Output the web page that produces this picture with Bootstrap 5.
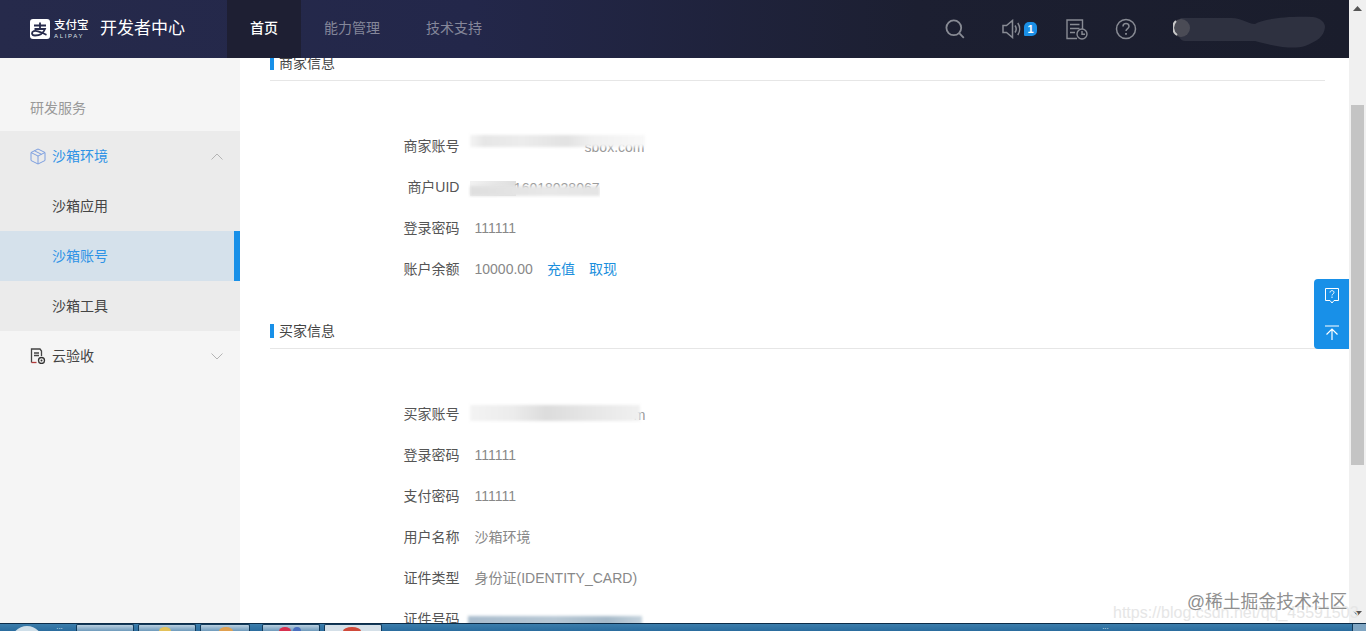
<!DOCTYPE html>
<html lang="zh-CN">
<head>
  <meta charset="UTF-8" />
  <title>沙箱账号 - 开发者中心</title>
  <link href="https://cdn.jsdelivr.net/npm/bootstrap@5.3.3/dist/css/bootstrap.min.css" rel="stylesheet" />
  <script src="https://cdn.jsdelivr.net/npm/bootstrap@5.3.3/dist/js/bootstrap.bundle.min.js"></script>
  <style>
    html, body { height: 631px; overflow: hidden; }
    body {
      font-family: "Liberation Sans", "Noto Sans CJK SC", sans-serif;
      font-size: 14px;
      color: #555;
      background: #fff;
    }
    .app-frame { height: 623px; }
    .page-pane { width: 1349px; min-width: 0; }

    /* header */
    .top-bar {
      height: 58px;
      flex-wrap: nowrap;
      background: linear-gradient(90deg, #262a4b 0%, #23274a 35%, #1c1f31 68%, #1a1d2c 100%);
      position: relative;
      z-index: 5;
    }
    .brand-box { width: 227px; padding-left: 30px; gap: 4px; }
    .brand-words { width: 34px; flex: none; }
    .brand-cn { font-size: 11.5px; line-height: 13px; color: #fff; white-space: nowrap; font-weight: 500; }
    .brand-en { font-size: 6px; line-height: 8px; color: #dfe0e6; letter-spacing: 1.7px; white-space: nowrap; }
    .brand-title { font-size: 17px; color: #fff; margin-left: 8px; white-space: nowrap; }
    .top-tab { height: 58px; line-height: 56px; padding: 0 23px; color: #85879a; }
    .top-tab.is-on { background: #1e1f33; color: #fff; font-weight: 500; }
    .tool-box { margin-left: auto; padding-right: 22px; }
    .tool-icon { display: block; color: #888b94; }
    .msg-count {
      position: absolute; left: 22px; top: 3px;
      width: 13px; height: 14px; line-height: 14px;
      border-radius: 5px 5px 5px 1px;
      background: #1a8fe6; color: #fff; font-size: 11px; font-weight: 700; text-align: center;
    }

    /* sidebar */
    .side-menu { width: 240px; flex: none; background: #f5f5f5; }
    .side-caption { height: 73px; padding: 40px 0 0 30px; line-height: 20px; color: #999; }
    .side-group { background: #ebebeb; }
    .side-link { height: 50px; padding-left: 52px; color: #444; }
    .side-head { height: 50px; padding: 0 17px 0 30px; color: #444; gap: 6px; }
    .side-head.is-open { color: #2f93e6; }
    .side-link.is-on { background: #d5e1eb; color: #2f93e6; border-right: 6px solid #1890e8; }

    /* content */
    .content-pane { padding: 0 24px 0 30px; overflow: hidden; }
    .info-title {
      position: relative; height: 28px; padding-left: 9px; line-height: 20px;
      border-bottom: 1px solid #e6e6e6; color: #444;
    }
    .info-title::before {
      content: ""; position: absolute; left: 0; top: 3px;
      width: 4px; height: 14px; background: #1890e8;
    }
    .info-first { margin-top: -5px; }
    .info-next { margin-top: 31px; }
    .info-list { padding-top: 45px; margin: 0; }
    .info-row { height: 41px; margin: 0; }
    .info-row dt { width: 189.5px; font-weight: 400; text-align: right; color: #555; }
    .info-row dd { margin: 0 0 0 15px; color: #888; white-space: nowrap; }
    .info-row a { color: #1a8fdd; text-decoration: none; margin-left: 14px; }

    /* smeared values */
    .smear-box { position: relative; display: block; height: 20px; line-height: 20px; margin-left: -7px; text-align: right; color: #999; }
    .smear-box::before {
      content: ""; position: absolute; filter: blur(1.5px);
      background: linear-gradient(90deg, #f4f4f4 0, #e6e6e6 8%, #ececec 30%, #e2e2e2 55%, #f0f0f0 70%, #f8f8f8 100%);
    }
    .smear-mail { width: 177px; }
    .smear-mail::before { left: 2px; right: 0; top: -2px; bottom: 10px; }
    .smear-uid {
      width: 132px; overflow: hidden;
      background: linear-gradient(90deg, #f2f2f2, #dedede) no-repeat 2px 3px / 46px 15px;
    }
    .smear-uid::before { left: 2px; right: 0; top: 8px; bottom: 2px; background: linear-gradient(90deg, #dedede, #e8e8e8 60%, #e4e4e4); }
    .smear-buyer { width: 178px; }
    .smear-buyer::before { left: 2px; right: 6px; top: 0; bottom: 4px; background: linear-gradient(90deg, #f3f3f3, #ececec 25%, #dcdcdc 45%, #e6e6e6 70%, #f0f0f0); }
    .smear-card { width: 178px; margin-left: -9px; }
    .smear-card::before { left: 2px; right: 2px; top: 6px; bottom: -4px; background: linear-gradient(90deg, #a9bccd, #b7c7d4 50%, #a6bac9 80%, #c4d2dc); }

    /* floating buttons */
    .float-tools {
      position: absolute; right: 0; top: 279px; width: 35px; height: 70px;
      background: #1890e8; border-radius: 4px 0 0 4px; z-index: 4;
    }

    /* watermarks */
    .mark-juejin {
      position: absolute; left: 1187px; top: 589px; font-size: 17.8px; line-height: 26px;
      color: #8f8f8f; text-shadow: 0 0 2px #fff; white-space: nowrap; z-index: 6;
    }
    .mark-csdn {
      position: absolute; left: 1113px; top: 603px; font-size: 16px; line-height: 20px;
      color: #e6e6e6; white-space: nowrap; z-index: 6;
    }

    /* scrollbar */
    .scroll-rail { width: 17px; flex: none; background: #f0f0f0; position: relative; z-index: 3; }
    .scroll-up { height: 17px; }
    .scroll-down { height: 20px; }
    .scroll-thumb { height: 360px; margin: 88px 2px 0 2px; background: #c4c4c4; }

    /* taskbar */
    .task-bar {
      height: 8px; border-top: 1px solid #0c2c48; overflow: hidden;
      background: linear-gradient(180deg, #3b7dab, #2a6c9e);
      position: relative; z-index: 8;
    }
    .task-orb { width: 32px; height: 32px; margin: 2px 0 0 11px; border-radius: 50%; background: #cfdfe9; flex: none; }
    .task-dots { width: 33px; color: #dfe9f0; font-size: 8px; line-height: 6px; text-align: center; flex: none; }
    .task-dots-end { margin-left: auto; }
    .task-btn { height: 7px; background: linear-gradient(180deg, #b9cfdf, #6f9bbc); border: 1px solid #123a5a; border-bottom: 0; border-radius: 2px 2px 0 0; flex: none; position: relative; }
    .task-time { color: #fff; font-size: 12px; line-height: 14px; margin: 5px 20px 0 180px; }
    .task-desk { width: 14px; height: 7px; background: #7fa5c2; border-left: 1px solid #123a5a; flex: none; }
    .tb-spot { position: absolute; top: 2px; height: 8px; border-radius: 50%; }
  </style>
</head>
<body>
  <div class="app-frame d-flex">
    <div class="page-pane d-flex flex-column position-relative">

      <nav class="top-bar navbar p-0 d-flex align-items-center">
        <div class="brand-box d-flex align-items-center">
          <svg width="20" height="20" viewBox="0 0 20 20" class="flex-none">
            <rect width="20" height="20" rx="3" fill="#fff" />
            <path d="M4 6.500h12M10 3.500v6M4.500 10h10.500c-1.500 4-5 6.500-10 6.500-2 0-3-.8-3-2.200 0-2 2.600-3 6-2 2.500.7 5 2 8.500 3.500" fill="none" stroke="#262a4b" stroke-width="1.800" />
          </svg>
          <div class="brand-words">
            <div class="brand-cn">支付宝</div>
            <div class="brand-en">ALIPAY</div>
          </div>
          <div class="brand-title">开发者中心</div>
        </div>
        <div class="nav flex-nowrap">
          <a class="top-tab is-on text-decoration-none" href="#">首页</a>
          <a class="top-tab text-decoration-none" href="#">能力管理</a>
          <a class="top-tab text-decoration-none" href="#">技术支持</a>
        </div>
        <div class="tool-box d-flex align-items-center">
          <svg class="tool-icon" width="20" height="20" viewBox="0 0 20 20" fill="none" stroke="currentColor" stroke-width="1.800">
            <circle cx="8.800" cy="8.800" r="7.400" /><path d="M14.200 14.200l4.600 4.600" />
          </svg>
          <div class="position-relative" style="margin-left:37px;width:36px;height:20px">
            <svg class="tool-icon" width="20" height="20" viewBox="0 0 20 20" fill="none" stroke="currentColor" stroke-width="1.500">
              <path d="M1 6.500h3.500L10.500 1.500v17L4.500 13.500H1zM13 6.500c1.400 2 1.400 5 0 7M15.800 4c2.400 3.500 2.400 8.500 0 12" />
            </svg>
            <span class="msg-count">1</span>
          </div>
          <svg class="tool-icon" style="margin-left:28px" width="22" height="21" viewBox="0 0 22 21" fill="none" stroke="currentColor" stroke-width="1.400">
            <path d="M11 19.500H1V1h15.500v9M4 5.500h9.500M4 9.500h9.500M4 13.500h5" />
            <circle cx="16" cy="15" r="5" /><path d="M16 12v3.300h3" />
          </svg>
          <svg class="tool-icon" style="margin-left:27px" width="22" height="22" viewBox="0 0 22 22" fill="none" stroke="currentColor" stroke-width="1.500">
            <circle cx="11" cy="11" r="9.500" />
            <path d="M8 8.500c0-4 6-4 6 0 0 2-3 2.300-3 4.500" />
            <path d="M11 15v1.800" stroke-width="1.800" />
          </svg>
          <svg class="tool-icon" style="margin-left:36px" width="154" height="40" viewBox="0 0 154 40">
            <path d="M8 9h50c12 0 16 6 24 6 8-5 30-8 58-7 8 1 12 6 12 10-1 10-8 14-20 19-10 3-25 2-50-5H12C4 32 0 14 8 9z" fill="#2e3140" />
            <circle cx="8" cy="19" r="9" fill="#4a4b55" />
            <path d="M3 12a9 9 0 0 0 1 14" stroke="#c8c8c8" stroke-width="2" fill="none" />
          </svg>
        </div>
      </nav>

      <div class="d-flex flex-grow-1" style="min-height:0">
        <aside class="side-menu">
          <div class="side-caption">研发服务</div>
          <div class="side-group">
            <div class="side-head is-open d-flex align-items-center">
              <svg width="16" height="17" viewBox="0 0 16 17" fill="none" stroke="#7d9fe0" stroke-width="1">
                <path d="M8 1l7 3.500v8L8 16l-7-3.500v-8zM1 4.500l7 3.500 7-3.500M8 8v8M4.500 2.800l7 3.500" />
              </svg>
              <span>沙箱环境</span>
              <svg class="ms-auto" width="12" height="7" viewBox="0 0 12 7" fill="none" stroke="#b4b4b4" stroke-width="1"><path d="M.5 6.500L6 1l5.500 5.500" /></svg>
            </div>
            <div class="side-link d-flex align-items-center">沙箱应用</div>
            <div class="side-link is-on d-flex align-items-center">沙箱账号</div>
            <div class="side-link d-flex align-items-center">沙箱工具</div>
          </div>
          <div class="side-head d-flex align-items-center">
            <svg width="16" height="16" viewBox="0 0 16 16" fill="none">
              <path d="M1.500 14.500V1h8.500l1.500 2v5" stroke="#444" stroke-width="1.300" />
              <path d="M1.500 14.500h5" stroke="#b23a3a" stroke-width="1.300" />
              <path d="M4 5h5M4 7.500h5" stroke="#444" stroke-width="1.300" />
              <circle cx="11.500" cy="12.500" r="3" stroke="#333" stroke-width="1.300" /><circle cx="11.500" cy="12.500" r="1" fill="#333" />
            </svg>
            <span>云验收</span>
            <svg class="ms-auto" width="12" height="7" viewBox="0 0 12 7" fill="none" stroke="#b4b4b4" stroke-width="1"><path d="M.5.500L6 6l5.500-5.500" /></svg>
          </div>
        </aside>

        <main class="content-pane flex-grow-1">
          <section class="info-first">
            <div class="info-title">商家信息</div>
            <dl class="info-list">
              <div class="info-row d-flex align-items-center">
                <dt>商家账号</dt>
                <dd><span class="smear-box smear-mail">sbox.com</span></dd>
              </div>
              <div class="info-row d-flex align-items-center">
                <dt>商户UID</dt>
                <dd><span class="smear-box smear-uid">16018028067</span></dd>
              </div>
              <div class="info-row d-flex align-items-center">
                <dt>登录密码</dt>
                <dd>111111</dd>
              </div>
              <div class="info-row d-flex align-items-center">
                <dt>账户余额</dt>
                <dd>10000.00<a href="#">充值</a><a href="#">取现</a></dd>
              </div>
            </dl>
          </section>
          <section class="info-next">
            <div class="info-title">买家信息</div>
            <dl class="info-list">
              <div class="info-row d-flex align-items-center">
                <dt>买家账号</dt>
                <dd><span class="smear-box smear-buyer">m</span></dd>
              </div>
              <div class="info-row d-flex align-items-center">
                <dt>登录密码</dt>
                <dd>111111</dd>
              </div>
              <div class="info-row d-flex align-items-center">
                <dt>支付密码</dt>
                <dd>111111</dd>
              </div>
              <div class="info-row d-flex align-items-center">
                <dt>用户名称</dt>
                <dd>沙箱环境</dd>
              </div>
              <div class="info-row d-flex align-items-center">
                <dt>证件类型</dt>
                <dd>身份证(IDENTITY_CARD)</dd>
              </div>
              <div class="info-row d-flex align-items-center">
                <dt>证件号码</dt>
                <dd><span class="smear-box smear-card"></span></dd>
              </div>
            </dl>
          </section>
        </main>
      </div>

      <div class="float-tools d-flex flex-column align-items-center">
        <svg class="mt-2" width="16" height="18" viewBox="0 0 16 18" fill="none" stroke="#fff" stroke-width="1">
          <path d="M1.500 1.500h13v12h-4.500L8 16l-2-2.500H1.500z" />
          <path d="M6 5.500c0-2.500 4-2.500 4 0 0 1.300-2 1.500-2 3M8 9.500v1.500" />
        </svg>
        <svg style="margin-top:20px" width="16" height="15" viewBox="0 0 16 15" fill="none" stroke="#fff" stroke-width="1.200">
          <path d="M1 1h14M8 15V4M2.500 9.500L8 4l5.500 5.500" />
        </svg>
      </div>

      <div class="mark-csdn">https://blog.csdn.net/qq_45591503</div>
      <div class="mark-juejin">@稀土掘金技术社区</div>
    </div>

    <div class="scroll-rail d-flex flex-column">
      <div class="scroll-up d-flex align-items-center justify-content-center">
        <svg width="9" height="5" viewBox="0 0 9 5"><path d="M4.500 0L9 5H0z" fill="#555" /></svg>
      </div>
      <div class="scroll-thumb"></div>
      <div class="scroll-down mt-auto d-flex align-items-center justify-content-center">
        <svg width="9" height="5" viewBox="0 0 9 5"><path d="M4.500 5L9 0H0z" fill="#555" /></svg>
      </div>
    </div>
  </div>

  <div class="task-bar d-flex">
    <div class="task-orb"></div>
    <div class="task-dots">...</div>
    <div class="task-btn" style="width:58px"></div>
    <div class="task-btn" style="width:58px;margin-left:4px"><span class="tb-spot" style="left:20px;width:12px;background:#e3c25a"></span></div>
    <div class="task-btn" style="width:50px;margin-left:4px"><span class="tb-spot" style="left:18px;width:14px;background:#e0a050"></span></div>
    <div class="task-btn" style="width:58px;margin-left:12px"><span class="tb-spot" style="left:16px;width:12px;background:#d8304f"></span><span class="tb-spot" style="left:30px;width:8px;background:#4a6fc0"></span></div>
    <div class="task-btn" style="width:58px;margin-left:4px;background:#d5e0e8"><span class="tb-spot" style="left:18px;width:18px;background:#d04a3a"></span></div>
    <div class="task-dots task-dots-end">...</div>
    <div class="task-time">14:50</div>
    <div class="task-desk"></div>
  </div>
</body>
</html>
